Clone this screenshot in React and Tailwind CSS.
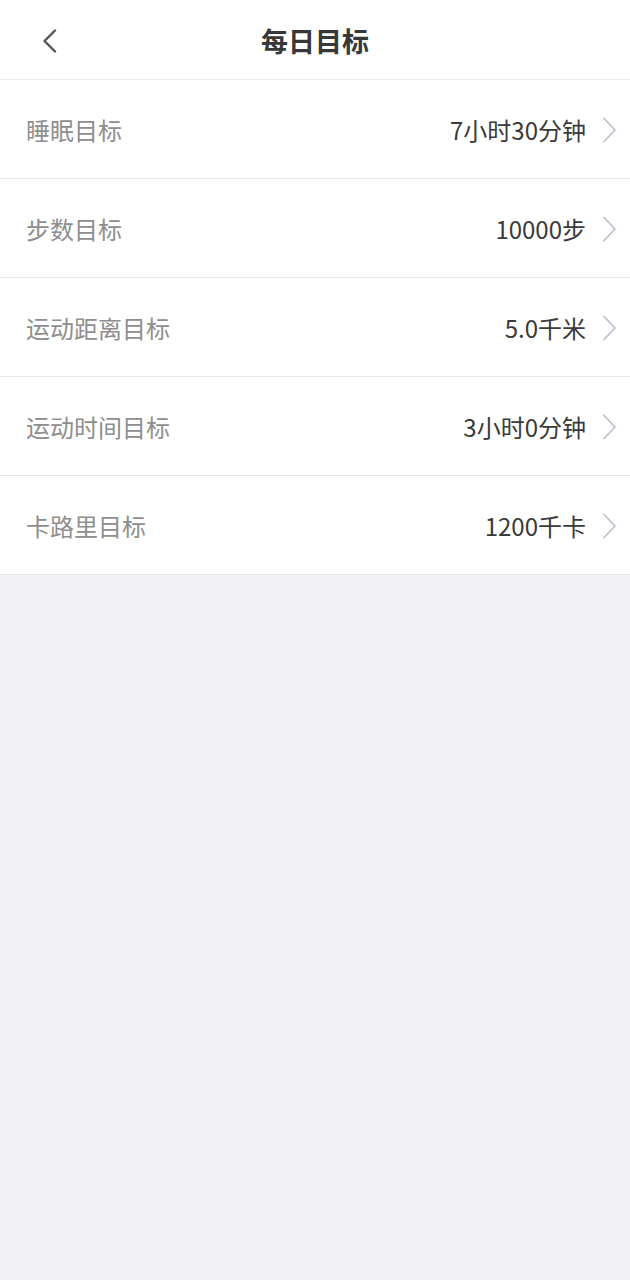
// Daily goals list
const goals = [
  { label: '睡眠目标', value: '7小时30分钟' },
  { label: '步数目标', value: '10000步' },
  { label: '运动距离目标', value: '5.0千米' },
  { label: '运动时间目标', value: '3小时0分钟' },
  { label: '卡路里目标', value: '1200千卡' },
];

const BackIcon = () => (
  <svg width="16" height="24" viewBox="0 0 16 24" fill="none">
    <path d="M13 1.5 2.5 12 13 22.5" stroke="#555" strokeWidth="2.4" strokeLinecap="round" strokeLinejoin="round" />
  </svg>
);

const Arrow = () => (
  <svg width="15" height="26" viewBox="0 0 15 26" fill="none">
    <path d="M2 1.5 13 13 2 24.5" stroke="#b7c2cd" strokeWidth="1.8" strokeLinecap="round" strokeLinejoin="round" />
  </svg>
);

export default function App() {
  return (
    <div
      className="min-h-[1280px] w-[630px] bg-[#f1f1f6]"
      style={{ fontFamily: '"Noto Sans CJK SC", "Noto Sans", sans-serif' }}
    >
      <header className="relative flex h-[80px] items-center justify-center border-b border-[#e6eaee] bg-white pt-[3px]">
        <button className="absolute left-[42px] top-[29px]">
          <BackIcon />
        </button>
        <h1 className="text-[27px] font-bold text-[#383838]">每日目标</h1>
      </header>

      <div className="bg-white">
        {goals.map((g) => (
          <div
            key={g.label}
            className="flex h-[99px] items-center justify-between border-b border-[#e3e9ed] pl-[26px] pr-[13px] pt-[2px]"
          >
            <span className="text-[24px] text-[#8e8e8e]">{g.label}</span>
            <div className="flex items-center">
              <span className="text-[24px] text-[#3a3a3a]">{g.value}</span>
              <span className="ml-[16px] flex">
                <Arrow />
              </span>
            </div>
          </div>
        ))}
      </div>
    </div>
  );
}
